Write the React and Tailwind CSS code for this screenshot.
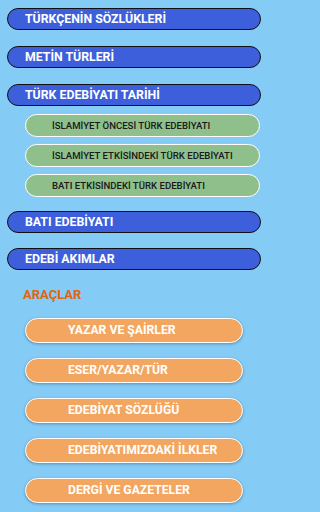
const mainTopics = ["TÜRKÇENİN SÖZLÜKLERİ", "METİN TÜRLERİ", "TÜRK EDEBİYATI TARİHİ"];
const history = [
  "İSLAMİYET ÖNCESİ TÜRK EDEBİYATI",
  "İSLAMİYET ETKİSİNDEKİ TÜRK EDEBİYATI",
  "BATI ETKİSİNDEKİ TÜRK EDEBİYATI",
];
const moreTopics = ["BATI EDEBİYATI", "EDEBİ AKIMLAR"];
const tools = [
  "YAZAR VE ŞAİRLER",
  "ESER/YAZAR/TÜR",
  "EDEBİYAT SÖZLÜĞÜ",
  "EDEBİYATIMIZDAKİ İLKLER",
  "DERGİ VE GAZETELER",
];

const BlueButton = ({ label }) => (
  <button className="flex items-center h-[22px] w-full rounded-full bg-[#3d5fdb] border-[1.5px] border-[#111] pl-[17px] text-left text-white font-bold text-[12.3px] leading-none">
    {label}
  </button>
);

const App = () => {
  return (
    <div
      className="w-full min-h-screen bg-[#84cbf5]"
      style={{ fontFamily: "Roboto, 'Liberation Sans', sans-serif" }}
    >
      <div className="w-[266px] h-[512px] overflow-hidden flex flex-col pl-[7px] pr-[5px] pt-[8px]">
        <div className="flex flex-col gap-[16px]">
          {mainTopics.map((t) => (
            <BlueButton key={t} label={t} />
          ))}
        </div>

        <div className="flex flex-col gap-[7px] mt-[8px] pl-[18px] pr-[1px]">
          {history.map((h) => (
            <button
              key={h}
              className="flex items-center h-[23px] w-full rounded-full bg-[#8fbf8b] border-[1.5px] border-white pl-[26px] text-left text-[#1a1a1a] font-medium text-[9.6px] leading-none"
            >
              {h}
            </button>
          ))}
        </div>

        <div className="flex flex-col gap-[15px] mt-[14px]">
          {moreTopics.map((t) => (
            <BlueButton key={t} label={t} />
          ))}
        </div>

        <p className="mt-[18px] pl-[16px] text-[#e0650f] font-bold text-[13px] leading-none">
          ARAÇLAR
        </p>

        <div className="flex flex-col gap-[15px] mt-[17px] pl-[18px] pr-[18px]">
          {tools.map((t) => (
            <button
              key={t}
              className="flex items-center h-[25px] w-full rounded-full bg-[#f3a660] border-[1.5px] border-white shadow-[0_1px_3px_rgba(0,0,0,0.3)] pl-[42px] text-left text-white font-bold text-[12.2px] leading-none"
            >
              {t}
            </button>
          ))}
        </div>
      </div>
    </div>
  );
};

export default App;
